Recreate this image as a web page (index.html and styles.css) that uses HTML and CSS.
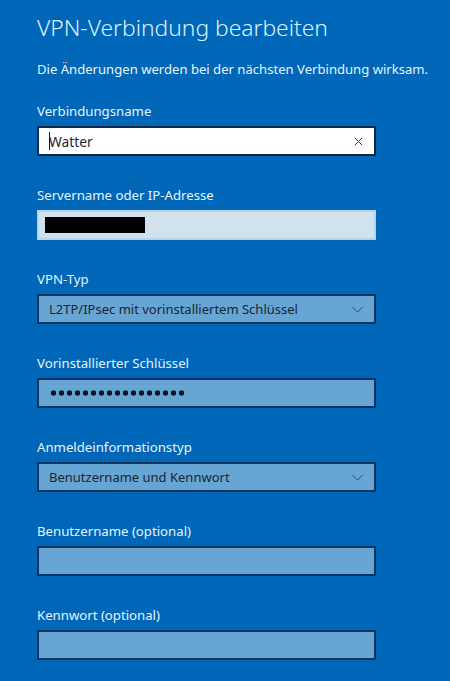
FILE: index.html
```html
<!DOCTYPE html>
<html lang="de">
<head>
<meta charset="utf-8">
<title>VPN-Verbindung bearbeiten</title>
<link rel="stylesheet" href="styles.css">
</head>
<body>
<main class="panel">
  <h1 class="title">VPN-Verbindung bearbeiten</h1>
  <p class="subtitle">Die Änderungen werden bei der nächsten Verbindung wirksam.</p>

  <div class="field">
    <label class="label">Verbindungsname</label>
    <div class="box box-focus">
      <span class="caret"></span><span class="value">Watter</span>
      <svg class="clear" width="10" height="10" viewBox="0 0 10 10"><path d="M1 1 L9 9 M9 1 L1 9" stroke="#333" stroke-width="1.1" fill="none"/></svg>
    </div>
  </div>

  <div class="field">
    <label class="label">Servername oder IP-Adresse</label>
    <div class="box box-light">
      <span class="redact"></span>
    </div>
  </div>

  <div class="field">
    <label class="label">VPN-Typ</label>
    <div class="box box-select">
      <span class="value">L2TP/IPsec mit vorinstalliertem Schlüssel</span>
      <svg class="chevron" width="14" height="8" viewBox="0 0 14 8"><path d="M1 1 L7 7 L13 1" stroke="#2b4d6e" stroke-width="1.1" fill="none"/></svg>
    </div>
  </div>

  <div class="field">
    <label class="label">Vorinstallierter Schlüssel</label>
    <div class="box box-select">
      <span class="dots" role="img" aria-label="Kennwort verborgen"></span>
    </div>
  </div>

  <div class="field">
    <label class="label">Anmeldeinformationstyp</label>
    <div class="box box-select">
      <span class="value">Benutzername und Kennwort</span>
      <svg class="chevron" width="14" height="8" viewBox="0 0 14 8"><path d="M1 1 L7 7 L13 1" stroke="#2b4d6e" stroke-width="1.1" fill="none"/></svg>
    </div>
  </div>

  <div class="field">
    <label class="label">Benutzername (optional)</label>
    <div class="box box-select"></div>
  </div>

  <div class="field">
    <label class="label">Kennwort (optional)</label>
    <div class="box box-select"></div>
  </div>
</main>
</body>
</html>
```

FILE: styles.css
```css
html, body {
  margin: 0;
  padding: 0;
  background: #0067b8;
  height: 100%;
}

body {
  font-family: "Noto Sans", "Open Sans", sans-serif;
  color: #e4f3ff;
  overflow: hidden;
}

.panel {
  padding: 13px 0 0 37px;
  width: 339px;
}

.title {
  margin: 0;
  font-size: 22.8px;
  font-weight: 300;
  line-height: 30px;
  color: #dcefff;
}

.subtitle {
  margin: 16px 0 0 0;
  font-size: 13.1px;
  line-height: 20px;
  color: #e4f3ff;
  white-space: nowrap;
}

.field {
  display: flex;
  flex-direction: column;
  margin-top: 22px;
}

.field + .field {
  margin-top: 29px;
}

.label {
  display: block;
  font-size: 13.2px;
  line-height: 20px;
  margin-bottom: 5px;
  color: #e4f3ff;
  white-space: nowrap;
}

.box {
  box-sizing: border-box;
  height: 30px;
  border: 2px solid #0b3560;
  display: flex;
  align-items: center;
  padding: 0 10px;
  font-size: 13px;
  color: #1a2633;
}

.box-focus {
  background: #ffffff;
  border-color: #0d2a47;
  font-size: 13.8px;
}

.box-light {
  background: #cfe2ee;
  border-color: #b7d3e7;
  padding-left: 6px;
}

.box-select {
  background: #66a5d4;
}

.caret {
  width: 1px;
  height: 18px;
  background: #111;
  margin-right: -1px;
}

.value {
  flex: 1;
  white-space: nowrap;
}

.clear {
  width: 9px;
  height: 9px;
  margin-right: 1px;
}

.chevron {
  width: 13px;
  height: 7px;
}

.redact {
  width: 100px;
  height: 16px;
  background: #000;
}

.dots {
  display: block;
  width: 133px;
  height: 6px;
  margin-left: 2px;
  background: radial-gradient(circle at 2.5px 3px, #0b1522 2.4px, transparent 2.9px) 0 0 / 8px 6px repeat-x;
}
```
